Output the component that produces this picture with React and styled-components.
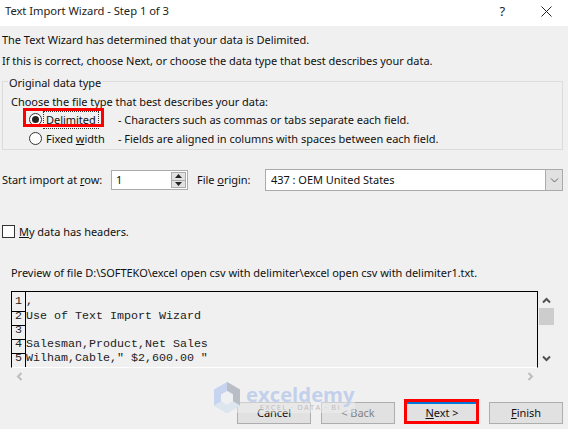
import React from 'react';
import styled, { createGlobalStyle } from 'styled-components';

const Global = createGlobalStyle`
  html, body { margin: 0; padding: 0; background: #f0f0f0; }
  body { width: 568px; height: 429px; overflow: hidden; }
  * { box-sizing: border-box; }
`;

const Wizard = styled.div`
  position: relative;
  width: 568px;
  height: 429px;
  overflow: hidden;
  background: #f0f0f0;
  color: #111;
  font-family: "Noto Sans", sans-serif;
  font-size: 11px;
  letter-spacing: -0.03px;
  line-height: 16px;
`;

const TitleBar = styled.div`
  height: 26px;
  background: #fff;
  display: flex;
  align-items: center;
  padding: 0 16px 4px 5px;
  font-size: 11.2px;
  color: #222;
`;
const TitleText = styled.div`
  flex: 1;
`;
const Help = styled.div`
  font-size: 13px;
  margin-right: 36px;
`;

const Content = styled.div`
  padding: 3px 5px 0 2px;
`;
const Intro = styled.div`
  height: 21px;
  display: flex;
  align-items: center;
`;

const Group = styled.div`
  margin-top: 10px;
  height: 69px;
  border: 1px solid #dcdcdc;
  position: relative;
`;
const Legend = styled.div`
  position: absolute;
  top: -7px;
  left: 5px;
  padding: 0 1px;
  background: #f0f0f0;
`;
const GroupText = styled.div`
  padding: 12px 0 0 8px;
  height: 28px;
`;
const TypeRow = styled.div`
  display: grid;
  grid-template-columns: 89px 1fr;
  height: 19px;
  align-items: center;
  padding-left: 26px;
`;
const RadioLabel = styled.div`
  display: flex;
  align-items: center;
  gap: 4px;
  white-space: nowrap;
`;
const Radio = styled.span`
  width: 13px;
  height: 13px;
  border-radius: 50%;
  border: 1px solid #333;
  background: #fff;
  display: flex;
  align-items: center;
  justify-content: center;
  &::after {
    content: '';
    width: 7px;
    height: 7px;
    border-radius: 50%;
    background: ${p => (p.$on ? '#222' : 'transparent')};
  }
`;
const Focused = styled.span`
  margin-left: -2px;
  padding: 0 2px;
  outline: 1px dotted #333;
`;
const Mark = styled.div`
  position: absolute;
  border: 3px solid #f00;
  pointer-events: none;
  left: ${p => p.$x}px;
  top: ${p => p.$y}px;
  width: ${p => p.$w}px;
  height: ${p => p.$h}px;
`;

const ImportRow = styled.div`
  display: flex;
  align-items: center;
  margin-top: 19px;
  height: 22px;
`;
const RowLabel = styled.div`
  width: 109px;
`;
const Spin = styled.div`
  width: 77px;
  height: 20px;
  border: 1px solid #ababab;
  background: #fff;
  display: flex;
  padding: 0 1px 0 4px;
  align-items: center;
  justify-content: space-between;
`;
const SpinButtons = styled.div`
  width: 15px;
  height: 16px;
  display: grid;
  grid-template-rows: 1fr 1fr;
  background: #ababab;
  border: 1px solid #ababab;
  gap: 1px;
`;
const SpinButton = styled.div`
  background: #e1e1e1;
  display: flex;
  align-items: center;
  justify-content: center;
`;
const OriginLabel = styled.div`
  width: 68px;
  margin-left: 9px;
`;
const Select = styled.div`
  width: 298px;
  height: 22px;
  border: 1px solid #ababab;
  background: #fff;
  display: flex;
  align-items: center;
  justify-content: space-between;
  padding-left: 5px;
`;
const SelectArrow = styled.div`
  width: 17px;
  height: 20px;
  background: #e1e1e1;
  border-left: 1px solid #ababab;
  display: flex;
  align-items: center;
  justify-content: center;
`;

const HeaderCheck = styled.div`
  display: flex;
  align-items: center;
  gap: 4px;
  margin-top: 33px;
  height: 15px;
`;
const Check = styled.span`
  width: 13px;
  height: 13px;
  border: 1px solid #333;
  background: #fff;
`;

const PreviewLabel = styled.div`
  margin: 26px 0 0 9px;
  height: 17px;
`;

const PreviewArea = styled.div`
  display: grid;
  grid-template-columns: 527px 1fr;
  margin: 9px 0 0 9px;
`;
const PreviewBox = styled.div`
  height: 77px;
  border-top: 1px solid #000;
  border-left: 1px solid #000;
  border-right: 1px solid #000;
  border-bottom: 1px solid #fff;
  overflow: hidden;
`;
const PreviewLine = styled.div`
  display: grid;
  grid-template-columns: 14px 1fr;
  height: 14px;
  font-family: "Liberation Mono", monospace;
  font-size: 11.67px;
  letter-spacing: 0;
  line-height: 18px;
  white-space: pre;
  color: #222;
  &:first-child { height: 15px; line-height: 19px; }
`;
const LineNumber = styled.div`
  border-right: 1px solid #000;
  border-bottom: 1px solid #000;
  text-align: center;
`;
const VBar = styled.div`
  display: flex;
  flex-direction: column;
  align-items: center;
  height: 72px;
  width: 15px;
  margin-left: 1px;
  padding-top: 5px;
`;
const Thumb = styled.div`
  width: 15px;
  height: 17px;
  margin-top: 3px;
  background: #cdcdcd;
`;
const VBarSpacer = styled.div`
  flex: 1;
`;
const HBar = styled.div`
  display: flex;
  justify-content: space-between;
  align-items: center;
  width: 527px;
  height: 16px;
  margin-left: 9px;
  padding: 0 3px 0 4px;
`;

const Footer = styled.div`
  display: flex;
  justify-content: flex-end;
  gap: 10px;
  margin-top: 18px;
`;
const Button = styled.div`
  width: 74px;
  height: 22px;
  background: #e1e1e1;
  border: 1px solid #adadad;
  display: flex;
  align-items: center;
  justify-content: center;
  color: ${p => (p.$off ? '#838383' : '#111')};
  ${p => p.$primary && 'border: 2px solid #0078d7;'}
`;

const Watermark = styled.div`
  position: absolute;
  left: 213px;
  top: 382px;
  width: 142px;
  height: 31px;
  background: rgba(240, 240, 240, 0.5);
  display: flex;
  gap: 5px;
  pointer-events: none;
`;
const WmLogo = styled.svg`
  flex-shrink: 0;
`;
const WmWords = styled.div`
  display: flex;
  flex-direction: column;
  padding-top: 2px;
  font-family: "Open Sans", sans-serif;
  color: #c3d0ec;
  white-space: nowrap;
`;
const WmName = styled.div`
  font-size: 20.3px;
  font-weight: 700;
  line-height: 20px;
  letter-spacing: 0;
`;
const WmTag = styled.div`
  margin-top: -1px;
  font-size: 7.5px;
  line-height: 8px;
  letter-spacing: 1.3px;
  color: #bdbdbd;
  text-align: center;
`;

const Arrow = ({ dir, size = 9, color = '#505050', width = 2 }) => {
  const paths = {
    up: 'M1 6.5 L4.5 3 L8 6.5',
    down: 'M1 2.5 L4.5 6 L8 2.5',
    left: 'M6.5 1 L3 4.5 L6.5 8',
    right: 'M2.5 1 L6 4.5 L2.5 8',
  };
  return (
    <svg width={size} height={size} viewBox="0 0 9 9">
      <path d={paths[dir]} fill="none" stroke={color} strokeWidth={width} />
    </svg>
  );
};

const Tri = ({ up }) => (
  <svg width="7" height="4" viewBox="0 0 7 4">
    <path d={up ? 'M3.5 0 L7 4 L0 4 Z' : 'M0 0 L7 0 L3.5 4 Z'} fill="#222" />
  </svg>
);

const lines = [
  ['1', ','],
  ['2', 'Use of Text Import Wizard'],
  ['3', ''],
  ['4', 'Salesman,Product,Net Sales'],
  ['5', 'Wilham,Cable," $2,600.00 "'],
  ['', ''],
];

export default function App() {
  return (
    <Wizard>
      <Global />
      <TitleBar>
        <TitleText>Text Import Wizard - Step 1 of 3</TitleText>
        <Help>?</Help>
        <svg width="11" height="11" viewBox="0 0 11 11">
          <path d="M0.5 0.5 L10.5 10.5 M10.5 0.5 L0.5 10.5" stroke="#222" strokeWidth="1" />
        </svg>
      </TitleBar>
      <Content>
        <Intro>The Text Wizard has determined that your data is Delimited.</Intro>
        <Intro>If this is correct, choose Next, or choose the data type that best describes your data.</Intro>
        <Group>
          <Legend>Original data type</Legend>
          <GroupText>Choose the file type that best describes your data:</GroupText>
          <TypeRow>
            <RadioLabel><Radio $on /><Focused><u>D</u>elimited</Focused></RadioLabel>
            <div>- Characters such as commas or tabs separate each field.</div>
          </TypeRow>
          <TypeRow>
            <RadioLabel><Radio /><span>Fixed <u>w</u>idth</span></RadioLabel>
            <div>- Fields are aligned in columns with spaces between each field.</div>
          </TypeRow>
        </Group>
        <ImportRow>
          <RowLabel>Start import at <u>r</u>ow:</RowLabel>
          <Spin>
            1
            <SpinButtons>
              <SpinButton><Tri up /></SpinButton>
              <SpinButton><Tri /></SpinButton>
            </SpinButtons>
          </Spin>
          <OriginLabel>File <u>o</u>rigin:</OriginLabel>
          <Select>
            437 : OEM United States
            <SelectArrow><Arrow dir="down" color="#666" width={1} /></SelectArrow>
          </Select>
        </ImportRow>
        <HeaderCheck><Check /><div><u>M</u>y data has headers.</div></HeaderCheck>
        <PreviewLabel>Preview of file D:\SOFTEKO\excel open csv with delimiter\excel open csv with delimiter1.txt.</PreviewLabel>
        <PreviewArea>
          <PreviewBox>
            {lines.map(([n, text], i) => (
              <PreviewLine key={i}>
                <LineNumber>{n}</LineNumber>
                <div>{text}</div>
              </PreviewLine>
            ))}
          </PreviewBox>
          <VBar>
            <Arrow dir="up" />
            <Thumb />
            <VBarSpacer />
            <Arrow dir="down" />
          </VBar>
        </PreviewArea>
        <HBar>
          <Arrow dir="left" color="#bdbdbd" />
          <Arrow dir="right" color="#bdbdbd" />
        </HBar>
        <Footer>
          <Button>Cancel</Button>
          <Button $off>&lt; Back</Button>
          <Button $primary><span><u>N</u>ext &gt;</span></Button>
          <Button><span><u>F</u>inish</span></Button>
        </Footer>
      </Content>
      <Mark $x={23} $y={108} $w={81} $h={19} />
      <Mark $x={404} $y={399} $w={75} $h={25} />
      <Watermark>
        <WmLogo width="28" height="31" viewBox="0 0 28 31">
          <path d="M14 0 L27 7.5 L27 23.5 L14 31 L1 23.5 L1 7.5 Z" fill="#c6d4f0" />
          <path d="M14 0 L27 7.5 L27 23.5 L20 19.5 L20 12 L14 8.5 Z" fill="#b9bdc6" />
          <path d="M8 19.5 L14 23 L20 19.5 L27 23.5 L14 31 L1 23.5 Z" fill="#dde6ef" />
          <path d="M14 9 L20 12.5 L20 19.5 L14 23 L8 19.5 L8 12.5 Z" fill="#eef0f2" />
        </WmLogo>
        <WmWords>
          <WmName>exceldemy</WmName>
          <WmTag>EXCEL · DATA · BI</WmTag>
        </WmWords>
      </Watermark>
    </Wizard>
  );
}
